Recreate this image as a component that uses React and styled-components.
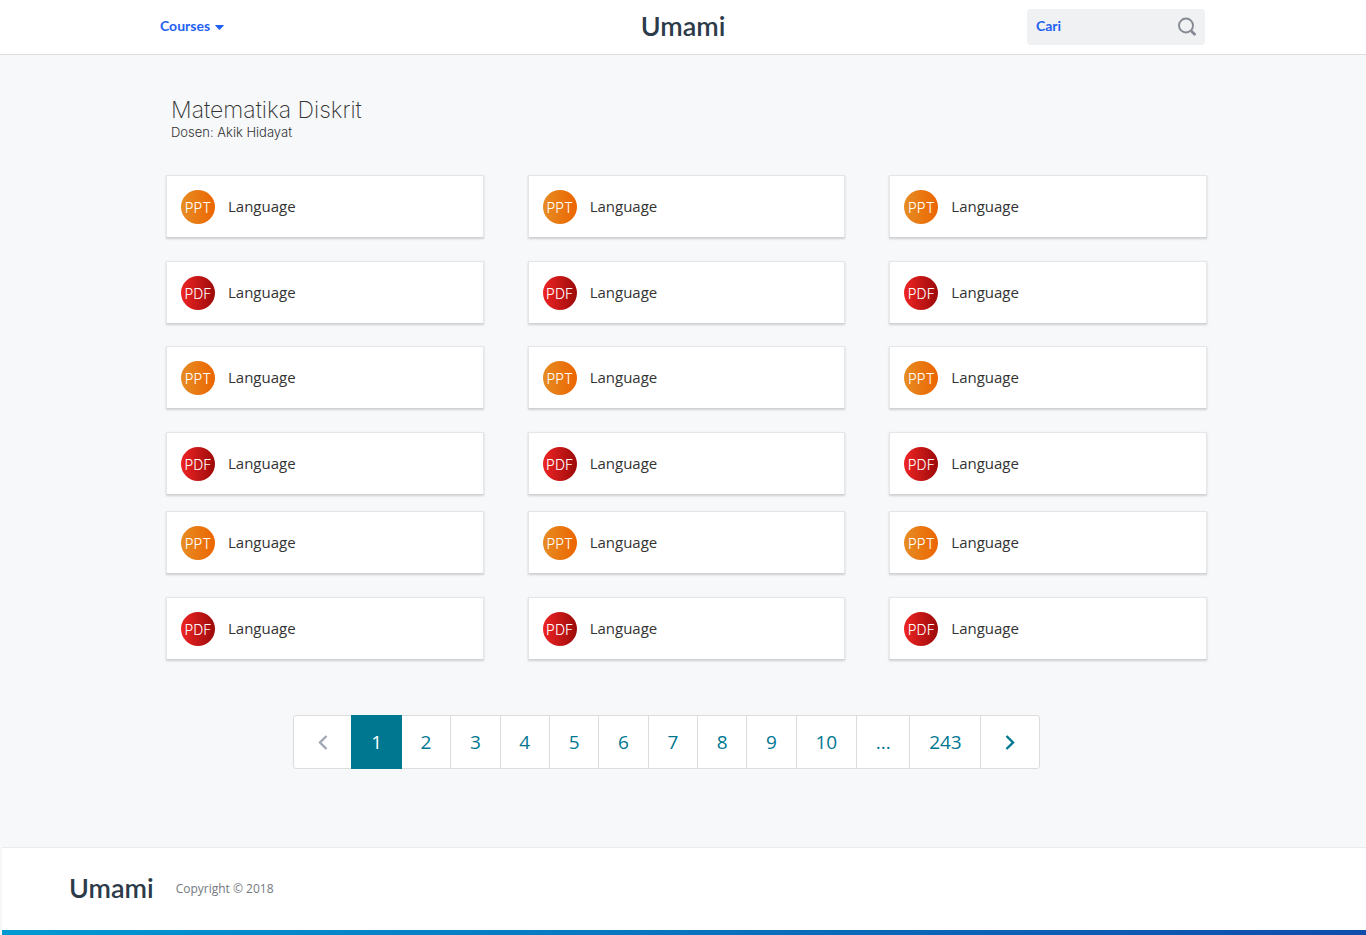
import React from "react";
import styled, { createGlobalStyle } from "styled-components";

const GlobalStyle = createGlobalStyle`
  *, *::before, *::after { box-sizing: border-box; }
  body {
    margin: 0;
    background: #f7f8fa;
    font-family: "Open Sans", "Noto Sans", sans-serif;
    color: #333;
  }
`;

const Page = styled.div`
  display: flex;
  flex-direction: column;
  min-height: 100vh;
`;

const Header = styled.header`
  background: #fff;
  border-bottom: 1px solid #dcdfdc;
`;

const HeaderInner = styled.div`
  display: grid;
  grid-template-columns: 1fr auto 1fr;
  align-items: center;
  max-width: 1046px;
  height: 54px;
  margin: 0 auto;
`;

const CoursesButton = styled.button`
  display: flex;
  align-items: center;
  gap: 5px;
  justify-self: start;
  padding: 0 0 3px;
  border: 0;
  background: none;
  color: #1f62f3;
  font: 700 14px/20px Lato, sans-serif;
  cursor: pointer;
`;

const Caret = styled.svg`
  width: 9px;
  height: 5px;
  margin-top: 3px;
`;

const Logo = styled.a`
  padding-bottom: 2px;
  color: #2c3b49;
  font: 600 27px/32px Lato, sans-serif;
  text-decoration: none;
`;

const SearchForm = styled.form`
  display: flex;
  align-items: center;
  justify-self: end;
  width: 178px;
  height: 36px;
  margin-right: 1px;
  padding: 0 8px 0 9px;
  border-radius: 4px;
  background: #f0f1f3;
`;

const SearchInput = styled.input`
  flex: 1;
  min-width: 0;
  padding: 0 0 3px;
  border: 0;
  outline: 0;
  background: none;
  color: #1f62f3;
  font: 700 14px/20px Lato, sans-serif;
  &::placeholder { color: #1f62f3; opacity: 1; }
`;

const SearchButton = styled.button`
  display: flex;
  padding: 0;
  border: 0;
  background: none;
  color: #858a92;
  cursor: pointer;
`;

const Main = styled.main`
  flex: 1;
  width: 100%;
  max-width: 1048px;
  margin: 0 auto;
  padding: 41px 0 78px 7px;
`;

const CourseHead = styled.div`
  padding-left: 5px;
  margin-bottom: 34px;
  font-family: Inter, "Liberation Sans", sans-serif;
`;

const Title = styled.h1`
  margin: 0;
  font-size: 23px;
  font-weight: 200;
  line-height: 28px;
`;

const Lecturer = styled.p`
  margin: 0;
  font-size: 13px;
  font-weight: 300;
  line-height: 17px;
`;

const CardGrid = styled.ul`
  display: grid;
  grid-template-columns: repeat(3, minmax(0, 1fr));
  gap: 23px 44px;
  margin: 0 0 ${(p) => p.$space}px;
  padding: 0;
  list-style: none;
`;

const Card = styled.a`
  display: flex;
  align-items: center;
  gap: 13px;
  height: 63px;
  padding: 0 14px;
  border: 1px solid #e5e6e9;
  border-bottom-color: #d0d1d5;
  background: #fff;
  box-shadow: 0 1px 2px rgba(0, 0, 0, 0.16);
  color: #333;
  font-size: 15px;
  line-height: 20px;
  text-decoration: none;
`;

const CardLabel = styled.span`
  padding-bottom: 2px;
`;

const FileBadge = styled.span`
  display: flex;
  align-items: center;
  justify-content: center;
  width: 34px;
  height: 34px;
  padding-top: 2px;
  border-radius: 50%;
  background: ${(p) =>
    p.$type === "PPT"
      ? "linear-gradient(90deg, #e68c24, #ec6500)"
      : "linear-gradient(90deg, #ee2424, #9c0a0a)"};
  color: #fff;
  font: 300 14px/18px Inter, "Liberation Sans", sans-serif;
`;

const Pagination = styled.nav`
  display: flex;
  width: 747px;
  max-width: 100%;
  height: 54px;
  margin: 0 0 0 127px;
  border: 1px solid #dcdcdc;
  border-radius: 3px;
  background: #fff;
`;

const PageButton = styled.button`
  flex: 1 1 auto;
  display: flex;
  align-items: center;
  justify-content: center;
  margin: ${(p) => (p.$active ? "-1px 0" : "0")};
  padding: 0 ${(p) => (p.$arrow ? 21 : p.$active ? 19 : 18)}px;
  border: 0;
  border-left: ${(p) => (p.$plain ? "0" : "1px solid #dcdcdc")};
  background: ${(p) => (p.$active ? "#007791" : "none")};
  color: ${(p) => (p.$active ? "#fff" : p.disabled ? "#a1a7b3" : "#007791")};
  font: 400 19px/26px "Open Sans", sans-serif;
  cursor: pointer;
`;

const Footer = styled.footer`
  margin-left: 2px;
  border-top: 1px solid #ebebeb;
  background: #fff;
`;

const FooterInner = styled.div`
  display: flex;
  align-items: center;
  gap: 22px;
  height: 82px;
  padding: 0 67px;
`;

const Copyright = styled.p`
  margin: 0;
  color: #73787f;
  font-size: 12px;
  line-height: 16px;
`;

const FooterStripe = styled.div`
  height: 5px;
  background: linear-gradient(90deg, #0099d2, #104dab);
`;

const groups = [
  { rows: ["PPT", "PDF"], space: 22 },
  { rows: ["PPT", "PDF"], space: 16 },
  { rows: ["PPT", "PDF"], space: 55 },
];

const pages = ["1", "2", "3", "4", "5", "6", "7", "8", "9", "10", "...", "243"];

function Chevron({ d }) {
  return (
    <svg width="14" height="18" viewBox="0 0 14 18" fill="none" stroke="currentColor" strokeWidth="2.4" aria-hidden="true">
      <path d={d} />
    </svg>
  );
}

export default function App() {
  return (
    <>
      <GlobalStyle />
      <Page>
        <Header>
          <HeaderInner>
            <CoursesButton type="button" aria-haspopup="true">
              Courses
              <Caret viewBox="0 0 9 5" aria-hidden="true">
                <path d="M.7 0h7.6q.9 0 .3.7L5.1 4.5q-.6.7-1.2 0L.4.7Q-.2 0 .7 0z" fill="currentColor" />
              </Caret>
            </CoursesButton>
            <Logo href="#">Umami</Logo>
            <SearchForm role="search" onSubmit={(e) => e.preventDefault()}>
              <SearchInput type="text" placeholder="Cari" aria-label="Cari" />
              <SearchButton type="submit" aria-label="Cari">
                <svg width="20" height="20" viewBox="0 0 20 20" fill="none" stroke="currentColor" aria-hidden="true">
                  <circle cx="9" cy="8.5" r="7" strokeWidth="1.9" />
                  <path d="M14 13.5l1.2 1.2" strokeWidth="1.9" />
                  <path d="M15.2 14.9l2.4 2.4" strokeWidth="2.8" strokeLinecap="round" />
                </svg>
              </SearchButton>
            </SearchForm>
          </HeaderInner>
        </Header>

        <Main>
          <CourseHead>
            <Title>Matematika Diskrit</Title>
            <Lecturer>Dosen: Akik Hidayat</Lecturer>
          </CourseHead>

          {groups.map((group, g) => (
            <CardGrid key={g} $space={group.space}>
              {group.rows.flatMap((type, r) =>
                [0, 1, 2].map((c) => (
                  <li key={`${r}-${c}`}>
                    <Card href="#">
                      <FileBadge $type={type}>{type}</FileBadge>
                      <CardLabel>Language</CardLabel>
                    </Card>
                  </li>
                ))
              )}
            </CardGrid>
          ))}

          <Pagination aria-label="Pagination">
            <PageButton type="button" $plain $arrow disabled aria-label="Previous">
              <Chevron d="M10.5 3L4 9.5l6.5 6.5" />
            </PageButton>
            {pages.map((label, i) => (
              <PageButton
                key={label}
                type="button"
                $active={i === 0}
                $plain={i < 2}
                aria-current={i === 0 ? "page" : undefined}
              >
                {label}
              </PageButton>
            ))}
            <PageButton type="button" $arrow aria-label="Next">
              <Chevron d="M3.5 3L10 9.5l-6.5 6.5" />
            </PageButton>
          </Pagination>
        </Main>

        <Footer>
          <FooterInner>
            <Logo href="#">Umami</Logo>
            <Copyright>Copyright © 2018</Copyright>
          </FooterInner>
          <FooterStripe />
        </Footer>
      </Page>
    </>
  );
}
